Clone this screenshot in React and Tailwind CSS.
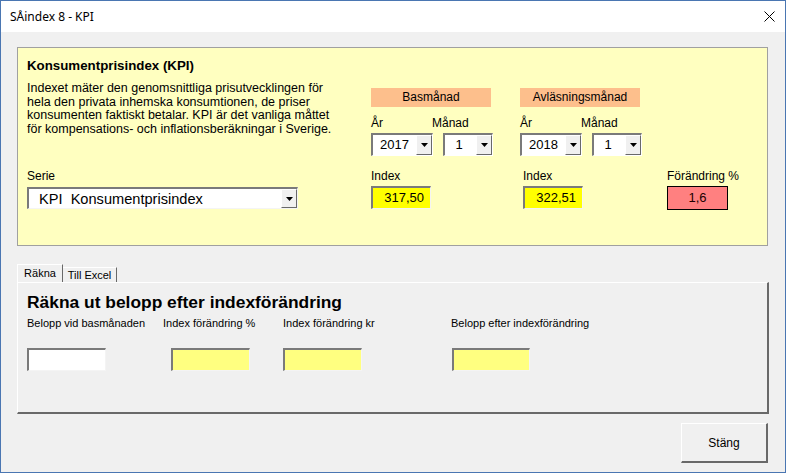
import React from 'react';

const font = { fontFamily: '"Liberation Sans", Arial, sans-serif' };

const DropButton = ({ h = 'h-full' }) => (
  <div className={`w-[16px] ${h} shrink-0 bg-[#f0f0f0] border-t border-l border-t-white border-l-white border-b border-r border-b-[#696969] border-r-[#696969] flex items-center justify-center`}>
    <svg width="7" height="4" viewBox="0 0 7 4">
      <polygon points="0,0 7,0 3.5,4" fill="#000" />
    </svg>
  </div>
);

const Combo = ({ value, w, textW }) => (
  <div className={`${w} h-[23px] flex bg-white border-t-2 border-l-2 border-t-[#7a7a7a] border-l-[#7a7a7a] border-b border-r border-b-white border-r-white`}>
    <div className={`${textW} text-[13px] leading-[20px] text-center text-black`}>{value}</div>
    <div className="flex-1" />
    <DropButton />
  </div>
);

const Sunken = ({ w, bg, children, className = '' }) => (
  <div className={`${w} h-[23px] ${bg} border-t-2 border-l-2 border-t-[#7a7a7a] border-l-[#7a7a7a] border-b border-r border-b-[#f4f4f4] border-r-[#f4f4f4] ${className}`}>
    {children}
  </div>
);

const MonthGroup = ({ title, year }) => (
  <div className="flex flex-col">
    <div className="w-[120px] h-[19px] bg-[#fdbf8c] text-[12px] leading-[19px] text-center text-black">{title}</div>
    <div className="flex mt-[9px] text-[12px] leading-[14px] text-black">
      <div className="w-[61px]">År</div>
      <div>Månad</div>
    </div>
    <div className="flex mt-[3px] gap-[10px]">
      <Combo value={year} w="w-[62px]" textW="w-[44px]" />
      <Combo value="1" w="w-[50px]" textW="w-[28px]" />
    </div>
  </div>
);

const IndexField = ({ value }) => (
  <div className="flex flex-col">
    <div className="text-[12px] leading-[14px] text-black">Index</div>
    <Sunken w="w-[60px]" bg="bg-[#ffff00]" className="mt-[3px] text-[13px] leading-[19px] text-right pr-[6px] text-black">
      {value}
    </Sunken>
  </div>
);

export default function App() {
  return (
    <div className="w-[786px] h-[473px] flex flex-col border border-[#4a76b2] bg-[#f0f0f0] overflow-hidden" style={font}>
      {/* title bar */}
      <div className="h-[31px] bg-white flex items-center justify-between pl-[9px] pr-[10px]">
        <span className="text-[12px] text-black" style={{ fontFamily: '"Noto Sans", "Open Sans", sans-serif' }}>SÅindex 8 - KPI</span>
        <svg width="11" height="11" viewBox="0 0 11 11">
          <path d="M0.5 0.5 L10.5 10.5 M10.5 0.5 L0.5 10.5" stroke="#000" strokeWidth="1" />
        </svg>
      </div>

      <div className="flex-1 flex flex-col pt-[15px] pl-[16px] pr-[17px] pb-[9px]">
        {/* KPI info panel */}
        <div className="w-[751px] h-[199px] border border-[#a0a0a0] bg-[#ffffc0] flex flex-col">
          <div className="h-[121px] flex">
            <div className="w-[353px] pl-[9px] pt-[10px]">
              <div className="text-[13.3px] leading-[16px] font-bold text-black">Konsumentprisindex (KPI)</div>
              <p className="mt-[8px] text-[12.5px] leading-[13.7px] text-black">
                Indexet mäter den genomsnittliga prisutvecklingen för
                <br />
                hela den privata inhemska konsumtionen, de priser
                <br />
                konsumenten faktiskt betalar. KPI är det vanliga måttet
                <br />
                för kompensations- och inflationsberäkningar i Sverige.
              </p>
            </div>
            <div className="w-[149px] pt-[40px]">
              <MonthGroup title="Basmånad" year="2017" />
            </div>
            <div className="pt-[40px]">
              <MonthGroup title="Avläsningsmånad" year="2018" />
            </div>
          </div>

          <div className="flex">
            <div className="w-[353px] pl-[9px] flex flex-col">
              <div className="text-[12px] leading-[14px] text-black">Serie</div>
              <div className="mt-[4px] w-[271px] h-[22px] flex bg-white border-t-2 border-l-2 border-t-[#7a7a7a] border-l-[#7a7a7a] border-b border-r border-b-[#f4f4f4] border-r-[#f4f4f4] overflow-hidden">
                <div className="flex-1 pl-[10px] text-[14.6px] leading-[21px] whitespace-pre text-black">KPI  Konsumentprisindex</div>
                <DropButton h="h-[19px]" />
              </div>
            </div>
            <div className="w-[152px]">
              <IndexField value="317,50" />
            </div>
            <div className="w-[144px]">
              <IndexField value="322,51" />
            </div>
            <div className="flex flex-col">
              <div className="text-[12px] leading-[14px] text-black">Förändring %</div>
              <div className="mt-[3px] w-[61px] h-[24px] bg-[#ff8080] border border-black text-[13px] leading-[22px] text-center text-[#200000]">
                1,6
              </div>
            </div>
          </div>
        </div>

        {/* tabs */}
        <div className="mt-[18px] h-[18px] flex items-end">
          <div className="h-[18px] w-[46px] border-t border-l border-t-white border-l-white border-r border-r-[#696969] text-[11px] leading-[16px] text-center text-black">
            Räkna
          </div>
          <div className="h-[15px] w-[54px] border-t border-t-white border-r border-r-[#696969] text-[11px] leading-[14px] text-center text-black">
            Till Excel
          </div>
        </div>
        <div className="w-[752px] h-[132px] border-t border-l border-t-white border-l-white border-r-2 border-b-2 border-r-[#696969] border-b-[#696969] pl-[9px] pt-[9px]">
          <div className="text-[17.4px] leading-[20px] font-bold text-black">Räkna ut belopp efter indexförändring</div>
          <div className="flex mt-[4px] text-[11px] leading-[14px] text-black">
            <div className="w-[136px] flex flex-col">
              <div>Belopp vid basmånaden</div>
              <Sunken w="w-[79px]" bg="bg-white" className="mt-[18px]" />
            </div>
            <div className="w-[120px] flex flex-col">
              <div>Index förändring %</div>
              <Sunken w="w-[79px]" bg="bg-[#ffff80]" className="mt-[18px] ml-[8px]" />
            </div>
            <div className="w-[168px] flex flex-col">
              <div>Index förändring kr</div>
              <Sunken w="w-[79px]" bg="bg-[#ffff80]" className="mt-[18px]" />
            </div>
            <div className="flex flex-col">
              <div>Belopp efter indexförändring</div>
              <Sunken w="w-[78px]" bg="bg-[#ffff80]" className="mt-[18px] ml-[1px]" />
            </div>
          </div>
        </div>

        {/* close button */}
        <div className="mt-[9px] flex justify-end">
          <button className="w-[87px] h-[40px] bg-[#f0f0f0] border-t border-l border-t-white border-l-white border-r-2 border-b-2 border-r-[#696969] border-b-[#696969] text-[12px] text-black">
            Stäng
          </button>
        </div>
      </div>
    </div>
  );
}
